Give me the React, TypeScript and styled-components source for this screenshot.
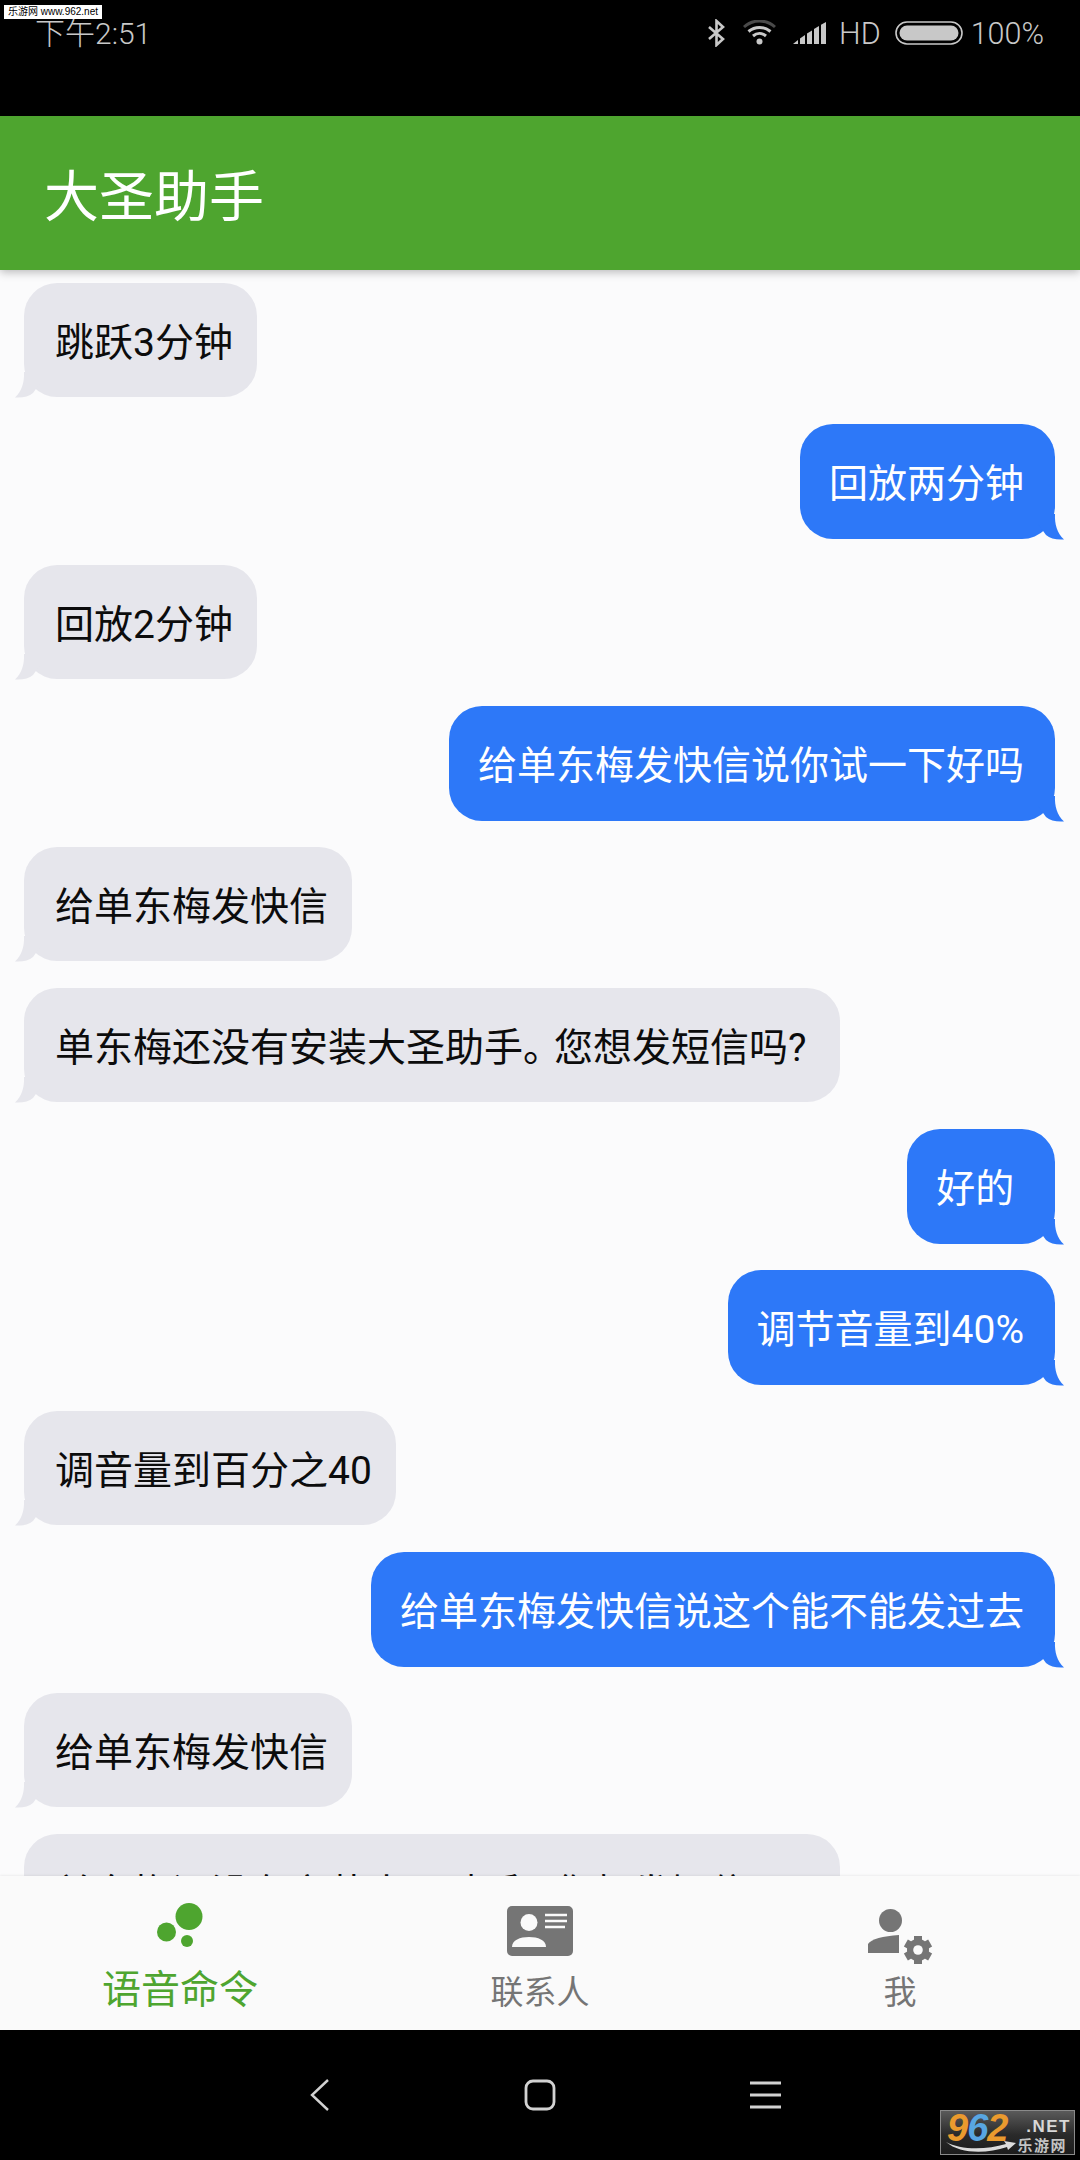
import React from "react";
import styled, { createGlobalStyle } from "styled-components";

const CJK = `"Noto Sans CJK SC", "Noto Sans", sans-serif`;

const Global = createGlobalStyle`
  html, body { margin: 0; padding: 0; background: #000; }
  #root { width: 1080px; height: 2160px; }
`;

const Screen = styled.div`
  position: relative;
  width: 1080px;
  height: 2160px;
  display: flex;
  flex-direction: column;
  overflow: hidden;
  background: #fbfbfc;
  font-family: Roboto, ${CJK};
`;

const StatusBar = styled.div`
  height: 116px;
  flex: none;
  box-sizing: border-box;
  padding: 17px 36px 0 35px;
  background: #000;
  color: #c8c8c8;
  display: flex;
  justify-content: space-between;
  align-items: flex-start;
`;

const Time = styled.span`
  font-size: 30px;
  font-weight: 300;
  line-height: 34px;
`;

const StatusRight = styled.div`
  display: flex;
  align-items: flex-start;
  height: 32px;
  margin-top: 1px;
`;

const StatusIcon = styled.svg<{ $gap: number; $top: number }>`
  display: block;
  flex: none;
  margin-left: ${(p) => p.$gap}px;
  margin-top: ${(p) => p.$top}px;
`;

const StatusText = styled.span<{ $gap: number }>`
  font-size: 30.5px;
  font-weight: 300;
  line-height: 32px;
  margin-left: ${(p) => p.$gap}px;
`;

const Watermark = styled.div`
  position: absolute;
  left: 4px;
  top: 5px;
  width: 98px;
  height: 14px;
  overflow: hidden;
  background: #fff;
  color: #000;
  font-family: "Liberation Sans", ${CJK};
  font-size: 10px;
  line-height: 14px;
  white-space: nowrap;
  text-align: center;
`;

const AppBar = styled.header`
  position: relative;
  z-index: 2;
  flex: none;
  height: 154px;
  box-sizing: border-box;
  padding: 9px 0 0 44px;
  background: #4ea52f;
  box-shadow: 0 2px 9px rgba(0, 0, 0, 0.28);
  display: flex;
  align-items: center;
`;

const Title = styled.h1`
  margin: 0;
  color: #fff;
  font-size: 55px;
  font-weight: 400;
  line-height: 1;
`;

const Chat = styled.main`
  flex: 1;
  min-height: 0;
  overflow: hidden;
  box-sizing: border-box;
  padding: 13px 25px 0 24px;
  display: flex;
  flex-direction: column;
  gap: 27px;
`;

const Bubble = styled.div<{ $mine?: boolean }>`
  position: relative;
  flex: none;
  align-self: ${(p) => (p.$mine ? "flex-end" : "flex-start")};
  box-sizing: border-box;
  height: ${(p) => (p.$mine ? "115px" : "114px")};
  margin-bottom: ${(p) => (p.$mine ? "-1px" : "0")};
  padding: ${(p) => (p.$mine ? "0 31px 3px 29px" : "0 24px 3px 31px")};
  border-radius: 33px;
  display: flex;
  align-items: center;
  font-size: 39px;
  background: ${(p) => (p.$mine ? "#2d78f8" : "#e6e6ec")};
  color: ${(p) => (p.$mine ? "#fff" : "#0c0c0c")};
`;

const BubbleText = styled.span`
  white-space: pre;
`;

const NarrowStop = styled.span`
  letter-spacing: -8px;
`;

const Tail = styled.svg<{ $mine?: boolean }>`
  position: absolute;
  bottom: -0.5px;
  width: 26px;
  height: 26px;
  ${(p) => (p.$mine ? "right: -9px; transform: scaleX(-1);" : "left: -9px;")}
  fill: ${(p) => (p.$mine ? "#2d78f8" : "#e6e6ec")};
`;

const TabBar = styled.nav`
  position: relative;
  z-index: 2;
  flex: none;
  height: 154px;
  background: #fafafa;
  box-shadow: 0 -1px 2px rgba(0, 0, 0, 0.06);
  display: grid;
  grid-template-columns: repeat(3, 1fr);
`;

const Tab = styled.div`
  position: relative;
  height: 154px;
  display: flex;
  flex-direction: column;
  align-items: center;
`;

const TabIconBox = styled.div<{ $top: number; $left: number }>`
  height: 58px;
  margin-top: ${(p) => p.$top}px;
  margin-left: ${(p) => p.$left}px;
`;

const TabLabel = styled.span<{ $active?: boolean }>`
  position: absolute;
  left: 0;
  right: 0;
  text-align: center;
  top: ${(p) => (p.$active ? "90px" : "97px")};
  font-size: ${(p) => (p.$active ? "39px" : "33px")};
  line-height: ${(p) => (p.$active ? "48px" : "40px")};
  color: ${(p) => (p.$active ? "#4ea52f" : "#757575")};
`;

const NavBar = styled.div`
  position: relative;
  flex: none;
  height: 130px;
  background: #000;
  box-sizing: border-box;
  padding: 49px 299px 0 310px;
  display: flex;
  justify-content: space-between;
  align-items: flex-start;
`;

const NavIcon = styled.svg`
  display: block;
  fill: none;
  stroke: #d2d2d2;
`;

const Logo = styled.div`
  position: absolute;
  left: 940px;
  top: 80px;
  width: 135px;
  height: 45px;
  box-sizing: border-box;
  border: 1px solid #8a8a8a;
  background: linear-gradient(#5a5a5a, #2a2a2a 55%, #1c1c1c);
  overflow: hidden;
`;

const LogoDigits = styled.span`
  position: absolute;
  left: 6px;
  top: 0;
  font-family: "Liberation Sans", sans-serif;
  font-size: 38px;
  line-height: 34px;
  font-weight: 700;
  font-style: italic;
  letter-spacing: -1px;
  color: #ea9a2e;
`;

const LogoBlue = styled.span`
  color: #58a6e2;
`;

const LogoNet = styled.span`
  position: absolute;
  right: 3px;
  top: 6px;
  font-family: "Liberation Sans", sans-serif;
  font-size: 17px;
  line-height: 20px;
  font-weight: 700;
  letter-spacing: 1.5px;
  color: #d8d8d8;
`;

const LogoCn = styled.span`
  position: absolute;
  right: 7px;
  top: 25px;
  font-family: ${CJK};
  font-size: 15px;
  line-height: 18px;
  font-weight: 700;
  letter-spacing: 1.5px;
  color: #c4c4c4;
`;

const LogoSwoosh = styled.svg`
  position: absolute;
  left: 5px;
  top: 29px;
`;

type Msg = { text: React.ReactNode; mine?: boolean };

const notInstalled = (
  <>
    单东梅还没有安装大圣助手<NarrowStop>。</NarrowStop>您想发短信吗?{" "}
  </>
);

const messages: Msg[] = [
  { text: "跳跃3分钟" },
  { text: "回放两分钟", mine: true },
  { text: "回放2分钟" },
  { text: "给单东梅发快信说你试一下好吗", mine: true },
  { text: "给单东梅发快信" },
  { text: notInstalled },
  { text: "好的 ", mine: true },
  { text: "调节音量到40%", mine: true },
  { text: "调音量到百分之40" },
  { text: "给单东梅发快信说这个能不能发过去", mine: true },
  { text: "给单东梅发快信" },
  { text: notInstalled },
];

const gearTeeth = [0, 60, 120, 180, 240, 300];

export default function App() {
  return (
    <Screen>
      <Global />
      <StatusBar>
        <Time>下午2:51</Time>
        <StatusRight>
          <StatusIcon $gap={0} $top={1} width="19" height="28" viewBox="0 0 19 28" fill="none" stroke="#c8c8c8" strokeWidth="2.6">
            <path d="M2 8 L16 20 L9.5 26 V2 L16 8 L2 20" />
          </StatusIcon>
          <StatusIcon $gap={16} $top={2} width="35" height="25" viewBox="0 0 35 25" fill="none" strokeWidth="3">
            <path d="M2 7 C11 -1 24 -1 33 7" stroke="#4a4a4a" />
            <path d="M6.5 11.5 C13 6 22 6 28.5 11.5" stroke="#c8c8c8" />
            <path d="M11 16 C15 12.5 20 12.5 24 16" stroke="#c8c8c8" />
            <circle cx="17.5" cy="21.5" r="3" fill="#c8c8c8" stroke="none" />
          </StatusIcon>
          <StatusIcon $gap={16} $top={4} width="34" height="22" viewBox="0 0 34 22" fill="#c8c8c8">
            <path d="M0 22 L5 18 V22 Z" />
            <path d="M7 16.5 L12 13 V22 H7 Z" />
            <path d="M14 11.5 L19 8.5 V22 H14 Z" />
            <path d="M21 7 L26 4 V22 H21 Z" />
            <path d="M28 2.8 L33 0 V22 H28 Z" />
          </StatusIcon>
          <StatusText $gap={12}>HD</StatusText>
          <StatusIcon $gap={14} $top={3} width="68" height="24" viewBox="0 0 68 24" fill="none">
            <rect x="1" y="1" width="66" height="22" rx="11" stroke="#c8c8c8" strokeWidth="1.6" />
            <rect x="4.5" y="4.5" width="59" height="15" rx="7.5" fill="#c8c8c8" />
          </StatusIcon>
          <StatusText $gap={8}>100%</StatusText>
        </StatusRight>
      </StatusBar>
      <Watermark>乐游网 www.962.net</Watermark>

      <AppBar>
        <Title>大圣助手</Title>
      </AppBar>

      <Chat>
        {messages.map((m, i) => (
          <Bubble key={i} $mine={m.mine}>
            <BubbleText>{m.text}</BubbleText>
            <Tail $mine={m.mine} viewBox="0 0 26 26">
              <path d="M9 0 C9.5 10 7 19 0 25.5 C8 26 14 24.5 18 21 L26 10 L26 0 Z" />
            </Tail>
          </Bubble>
        ))}
      </Chat>

      <TabBar>
        <Tab>
          <TabIconBox $top={27} $left={0}>
            <svg width="46" height="44" viewBox="0 0 46 44" fill="#4ea52f">
              <circle cx="32" cy="13.5" r="13.5" />
              <circle cx="9.5" cy="29" r="9.5" />
              <circle cx="30" cy="38" r="6" />
            </svg>
          </TabIconBox>
          <TabLabel $active>语音命令</TabLabel>
        </Tab>
        <Tab>
          <TabIconBox $top={30} $left={0}>
            <svg width="66" height="50" viewBox="0 0 66 50">
              <rect width="66" height="50" rx="5" fill="#757575" />
              <circle cx="22" cy="16.5" r="8.5" fill="#fafafa" />
              <path d="M5 41 C5 34 13 31 22 31 C31 31 39 34 39 41 Z" fill="#fafafa" />
              <path d="M38 9 H60 M38 15 H60 M38 21 H58" stroke="#fafafa" strokeWidth="2.6" />
            </svg>
          </TabIconBox>
          <TabLabel>联系人</TabLabel>
        </Tab>
        <Tab>
          <TabIconBox $top={32} $left={1}>
            <svg width="66" height="58" viewBox="0 0 66 58" fill="#757575">
              <circle cx="22.5" cy="12.5" r="11.5" />
              <path d="M0 45 V36 C3 31 15 28 31 27 V45 Z" />
              <circle cx="50" cy="42" r="17" fill="#fafafa" />
              <circle cx="50" cy="42" r="11" />
              {gearTeeth.map((a) => (
                <rect key={a} x="46" y="28" width="8" height="8" transform={`rotate(${a} 50 42)`} />
              ))}
              <circle cx="50" cy="42" r="4.8" fill="#fafafa" />
            </svg>
          </TabIconBox>
          <TabLabel>我</TabLabel>
        </Tab>
      </TabBar>

      <NavBar>
        <NavIcon width="20" height="32" viewBox="0 0 20 32" strokeWidth="2.4">
          <path d="M18 1 L2 16 L18 31" />
        </NavIcon>
        <NavIcon width="32" height="32" viewBox="0 0 32 32" strokeWidth="2.8">
          <rect x="2" y="2" width="28" height="28" rx="7" />
        </NavIcon>
        <NavIcon width="32" height="32" viewBox="0 0 32 32" strokeWidth="3">
          <path d="M1 4 H32 M1 16 H32 M1 28 H32" />
        </NavIcon>
        <Logo>
          <LogoDigits>
            9<LogoBlue>6</LogoBlue>2
          </LogoDigits>
          <LogoNet>.NET</LogoNet>
          <LogoCn>乐游网</LogoCn>
          <LogoSwoosh width="70" height="14" viewBox="0 0 70 14" fill="#dcdcdc">
            <path d="M0 2 C14 10 40 10 60 4 L58 1 L70 3 L62 10 L61 7 C40 14 14 14 0 2 Z" />
          </LogoSwoosh>
        </Logo>
      </NavBar>
    </Screen>
  );
}
